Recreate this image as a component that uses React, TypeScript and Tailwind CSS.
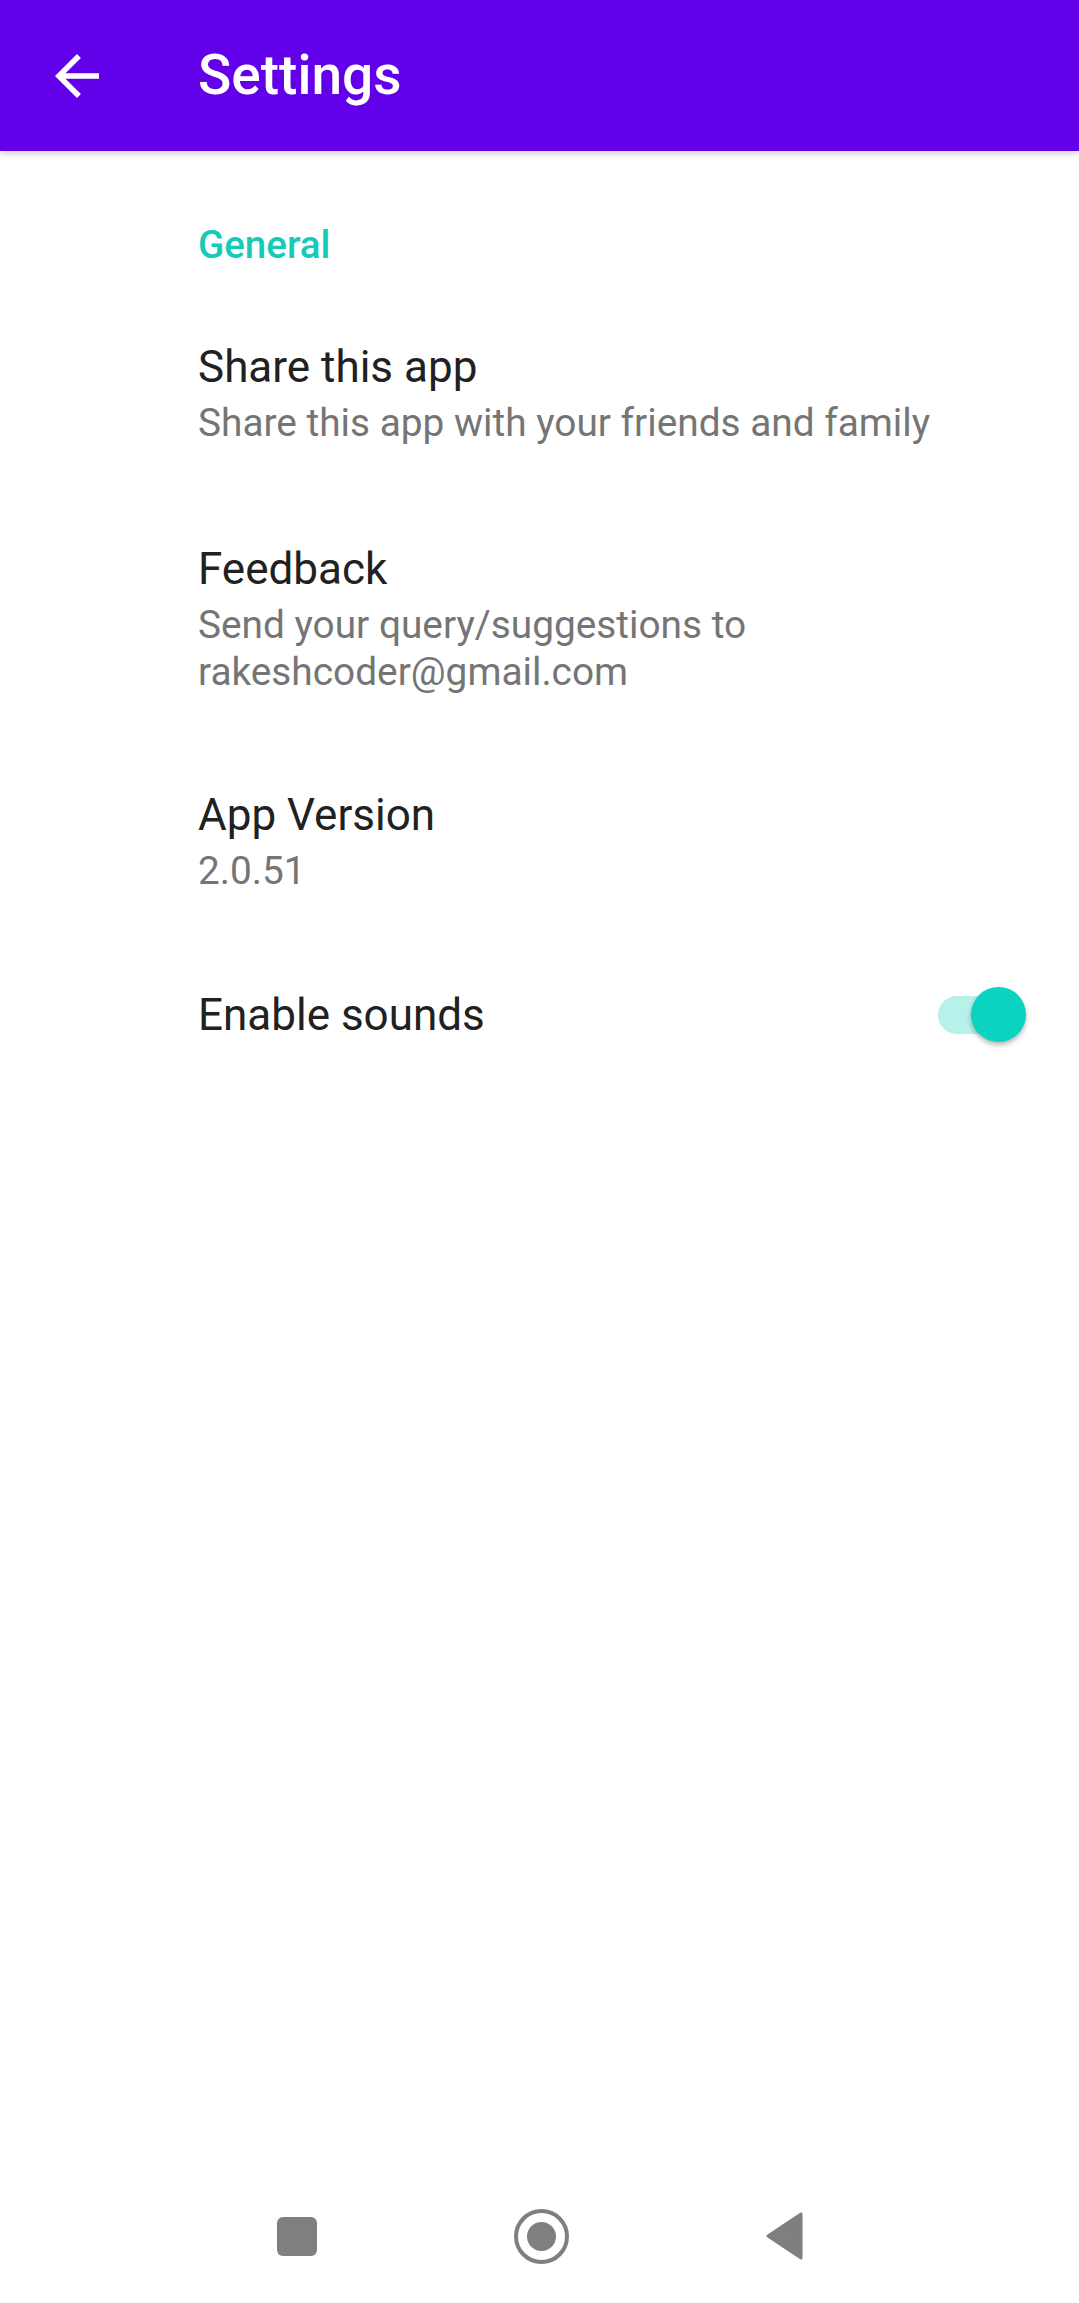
import React, { useState } from 'react';

// Preference rows shown under the "General" category
const prefs = [
  { id: 'share', title: 'Share this app', summary: ['Share this app with your friends and family'], pad: 'pt-[47px] pb-[50px]' },
  { id: 'feedback', title: 'Feedback', summary: ['Send your query/suggestions to', 'rakeshcoder@gmail.com'], pad: 'py-[47px]' },
  { id: 'version', title: 'App Version', summary: ['2.0.51'], pad: 'py-[47px]' },
];

const BackArrow = () => (
  <svg viewBox="0 0 24 24" className="w-[66px] h-[66px]" fill="#ffffff">
    <path d="M20 11H7.83l5.59-5.59L12 4l-8 8 8 8 1.41-1.41L7.83 13H20v-2z" />
  </svg>
);

const Toggle = ({ on, onChange }: { on: boolean; onChange: () => void }) => (
  <button onClick={onChange} className="relative w-[88px] h-[55px] shrink-0">
    <span
      className={`absolute left-0 top-[8.5px] w-[84px] h-[38px] rounded-full ${
        on ? 'bg-[#b6f1ea]' : 'bg-[#bdbdbd]'
      }`}
    />
    <span
      className={`absolute top-0 w-[55px] h-[55px] rounded-full shadow-[0_3px_5px_rgba(0,0,0,0.28)] ${
        on ? 'right-0 bg-[#0bd3c0]' : 'left-0 bg-[#fafafa]'
      }`}
    />
  </button>
);

export default function App() {
  const [sounds, setSounds] = useState(true);

  return (
    <div className="min-h-[2303px] flex flex-col bg-white font-['Roboto','Liberation_Sans',sans-serif]">
      {/* Toolbar */}
      <header className="relative z-10 h-[151px] shrink-0 bg-[#6200ea] flex items-center shadow-[0_3px_6px_rgba(0,0,0,0.18)]">
        <div className="ml-[44px] flex items-center">
          <BackArrow />
        </div>
        <h1 className="ml-[88px] text-white text-[55px] leading-none font-medium">Settings</h1>
      </header>

      {/* Preference list */}
      <main className="flex-1 pt-[70px] pl-[198px] pr-[53px]">
        <div className="text-[38.5px] leading-[48px] font-medium text-[#12ccb9] mb-[25px]">General</div>

        {prefs.map((p) => (
          <div key={p.id} className={p.pad}>
            <div className="text-[44px] leading-[52px] text-[#212121]">{p.title}</div>
            <div className="mt-[6px] text-[38.8px] leading-[47px] text-[#757575]">
              {p.summary.map((line) => (
                <div key={line}>{line}</div>
              ))}
            </div>
          </div>
        ))}

        <div className="pt-[46px] pb-[47px] flex items-center justify-between">
          <div className="text-[44px] leading-[52px] text-[#212121]">Enable sounds</div>
          <Toggle on={sounds} onChange={() => setSounds(!sounds)} />
        </div>
      </main>

      {/* System navigation bar */}
      <nav className="h-[132px] shrink-0 flex items-center justify-center gap-[197px] pb-[2px]">
        <div className="w-[40px] h-[39px] rounded-[6px] bg-[#7f7f7f]" />
        <div className="w-[55px] h-[55px] rounded-full border-[4px] border-[#7f7f7f] flex items-center justify-center">
          <div className="w-[29px] h-[29px] rounded-full bg-[#7f7f7f]" />
        </div>
        <svg viewBox="0 0 37 48" className="w-[37px] h-[48px]">
          <polygon
            points="35,2 2,24 35,46"
            fill="#7f7f7f"
            stroke="#7f7f7f"
            strokeWidth="3"
            strokeLinejoin="round"
          />
        </svg>
      </nav>
    </div>
  );
}
